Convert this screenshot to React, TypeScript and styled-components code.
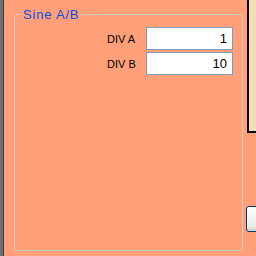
import React from "react";
import styled, { createGlobalStyle } from "styled-components";

const Global = createGlobalStyle`
  html, body { margin: 0; padding: 0; background: #ffa07a; }
  #root { width: 256px; height: 256px; }
`;

const Page = styled.div`
  display: flex;
  width: 256px;
  height: 256px;
  overflow: hidden;
  background: #ffa07a;
  font-family: "Liberation Sans", Arial, sans-serif;
`;

const SideBar = styled.div`
  flex: 0 0 3px;
  background: #707070;
  border-right: 1px solid #3a3a3a;
`;

const Group = styled.fieldset`
  box-sizing: border-box;
  flex: 0 0 229px;
  height: 243px;
  margin: 8px 0 0 10px;
  padding: 0;
  border: 1px solid #cfcdbd;
  border-radius: 3px;
  min-width: 0;
`;

const Legend = styled.legend`
  margin-left: 6px;
  padding: 0 2px;
  font-size: 13px;
  line-height: 13px;
  letter-spacing: 0.8px;
  color: #0a4ee0;
`;

const Fields = styled.div`
  display: grid;
  grid-template-columns: 39px 87px;
  justify-content: end;
  align-items: center;
  row-gap: 2px;
  padding: 6px 9px 0 0;
`;

const Label = styled.label`
  font-size: 11px;
  color: #000;
`;

const Input = styled.input`
  box-sizing: border-box;
  width: 87px;
  height: 23px;
  margin: 0;
  padding: 0 5px;
  border: 1px solid #7f9db9;
  background: #fff;
  font-family: "Liberation Sans", Arial, sans-serif;
  font-size: 13px;
  text-align: right;
  color: #000;
  outline: none;
`;

const RightColumn = styled.div`
  flex: 0 0 60px;
  display: flex;
  flex-direction: column;
  margin-left: 3px;
`;

const InfoPanel = styled.div`
  height: 131px;
  margin-left: 1px;
  background: #f5deb3;
  border-left: 2px solid #000;
  border-bottom: 2px solid #000;
`;

const Button = styled.button`
  box-sizing: border-box;
  height: 26px;
  margin-top: 73px;
  border: 1px solid #003c74;
  border-radius: 3px;
  background: linear-gradient(#ffffff, #ecebe6 80%, #d6d0c5);
  padding: 0;
`;

export default function App() {
  return (
    <>
      <Global />
      <Page>
        <SideBar />
        <Group>
          <Legend>Sine A/B</Legend>
          <Fields>
            <Label>DIV A</Label>
            <Input defaultValue="1" />
            <Label>DIV B</Label>
            <Input defaultValue="10" />
          </Fields>
        </Group>
        <RightColumn>
          <InfoPanel />
          <Button />
        </RightColumn>
      </Page>
    </>
  );
}
